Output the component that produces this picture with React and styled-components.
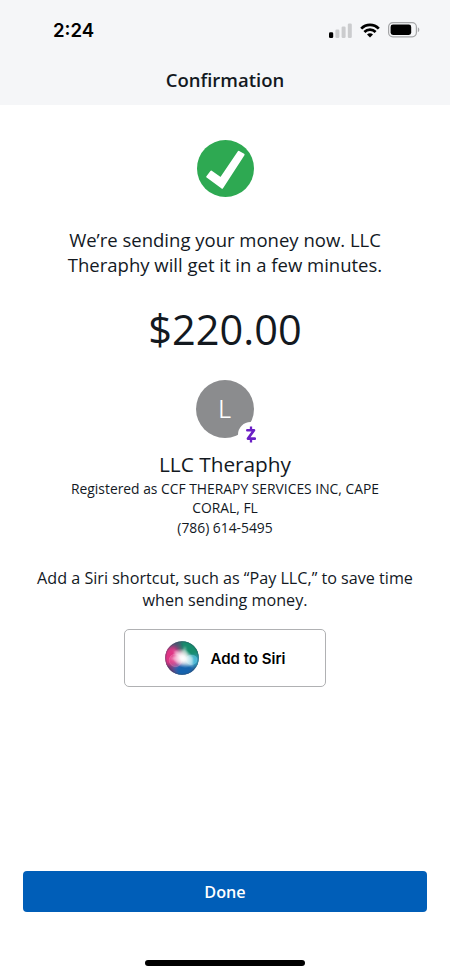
import React from 'react';
import styled, { createGlobalStyle } from 'styled-components';

const SignalIcon = () => (
  <svg width="23" height="15" viewBox="0 0 23 15">
    <rect x="0" y="9.3" width="4.2" height="5.7" rx="1.3" fill="#000" />
    <rect x="6.4" y="6.5" width="4" height="8.5" rx="1.3" fill="#cbccce" />
    <rect x="12.6" y="3.4" width="4" height="11.6" rx="1.3" fill="#cbccce" />
    <rect x="18.8" y="0.4" width="4" height="14.6" rx="1.3" fill="#cbccce" />
  </svg>
);

const WifiIcon = () => (
  <svg width="20" height="15" viewBox="0 0 20 15" fill="none" stroke="#000" strokeWidth="2.7">
    <path d="M1.2 5.6C6.1 .6 13.9 .6 18.8 5.6" />
    <path d="M4.4 9C7.5 5.8 12.5 5.8 15.6 9" />
    <path d="M10 14.4L7 11.4C8.7 9.8 11.3 9.8 13 11.4Z" fill="#000" stroke="none" />
  </svg>
);

const BatteryIcon = () => (
  <svg width="32" height="16" viewBox="0 0 32 16">
    <rect x="0.6" y="0.6" width="27.8" height="14.3" rx="4.2" fill="none" stroke="#a5a6a8" strokeWidth="1.2" />
    <rect x="2.6" y="2.5" width="20.6" height="10.5" rx="2.4" fill="#000" />
    <path d="M29.8 5.3C31.8 6 31.8 9.5 29.8 10.2Z" fill="#a5a6a8" />
  </svg>
);

const CheckIcon = () => (
  <svg width="57" height="57" viewBox="0 0 57 57">
    <circle cx="28.5" cy="28.5" r="28.5" fill="#2ea952" />
    <path
      d="M14.2 31.6L23.8 38.2L41.7 11.8L46.6 14.6L25.2 47.8L10.2 36.8Z"
      fill="#fff"
      stroke="#fff"
      strokeWidth="2"
      strokeLinejoin="round"
    />
  </svg>
);

const ZelleIcon = () => (
  <svg width="10" height="17" viewBox="0 0 10 17" fill="none" stroke="#6a1fc5" strokeWidth="2.3">
    <path d="M1.3 4.2H8L2 12.6H8.9" strokeWidth="2.6" strokeLinejoin="round" strokeLinecap="round" />
    <path d="M5 .4V4M5 12.8V16.6" />
  </svg>
);

const SiriIcon = () => (
  <svg width="34" height="34" viewBox="0 0 34 34">
    <defs>
      <clipPath id="orb">
        <circle cx="17" cy="17" r="16.8" />
      </clipPath>
      <radialGradient id="glow">
        <stop offset="0" stopColor="#fff" />
        <stop offset=".25" stopColor="#fff" stopOpacity=".9" />
        <stop offset="1" stopColor="#fff" stopOpacity="0" />
      </radialGradient>
      <filter id="soft" x="-50%" y="-50%" width="200%" height="200%">
        <feGaussianBlur stdDeviation="2.2" />
      </filter>
      <filter id="haze" x="-50%" y="-50%" width="200%" height="200%">
        <feGaussianBlur stdDeviation="1.2" />
      </filter>
    </defs>
    <g clipPath="url(#orb)">
      <rect width="34" height="34" fill="#44556f" />
      <g filter="url(#soft)">
        <path d="M15 -3H37V17L18 16Z" fill="#178c6c" />
        <path d="M-3 7L10 5L19 17L9 27L-3 24Z" fill="#df3585" />
        <path d="M18 17L37 14V27L24 25Z" fill="#2f9fbd" />
        <path d="M5 26L18 20L31 25L25 37H10Z" fill="#1764ae" />
        <path d="M-2 24L7 23L11 34L2 34Z" fill="#69366f" />
      </g>
      <circle cx="10.5" cy="19.3" r="6.3" fill="#f280b2" fillOpacity=".25" stroke="#f5a6cc" strokeOpacity=".35" strokeWidth=".8" />
      <ellipse cx="26.5" cy="18.8" rx="5.7" ry="4.8" fill="#65d1ed" fillOpacity=".5" stroke="#9ce0ed" strokeOpacity=".35" strokeWidth=".7" />
      <path
        d="M8 9L16 12L20 5L23 14L28 16L28 26L20 23L13 22L5 17L12 15Z"
        fill="#fff"
        fillOpacity=".4"
        filter="url(#haze)"
      />
      <ellipse cx="18" cy="17.2" rx="11.5" ry="9" fill="url(#glow)" transform="rotate(35 18 17.2)" />
    </g>
    <circle cx="17" cy="17" r="16.3" fill="none" stroke="#34465d" strokeOpacity=".3" />
  </svg>
);

const App = () => {
  return (
    <>
      <GlobalStyle />
      <Screen>
        <Header>
          <StatusBar>
            <Time>2:24</Time>
            <StatusIcons>
              <SignalIcon />
              <WifiIcon />
              <BatteryIcon />
            </StatusIcons>
          </StatusBar>
          <Title>Confirmation</Title>
        </Header>

        <Content>
          <CheckIcon />
          <Message>
            We’re sending your money now. LLC
            <br />
            Theraphy will get it in a few minutes.
          </Message>
          <Amount>$220.00</Amount>

          <Avatar>
            L
            <Badge>
              <ZelleIcon />
            </Badge>
          </Avatar>
          <Name>LLC Theraphy</Name>
          <Details>
            Registered as CCF THERAPY SERVICES INC, CAPE
            <br />
            CORAL, FL
            <br />
            (786) 614-5495
          </Details>

          <Hint>
            Add a Siri shortcut, such as “Pay LLC,” to save time
            <br />
            when sending money.
          </Hint>
          <SiriButton>
            <SiriIcon />
            <span>Add to Siri</span>
          </SiriButton>
        </Content>

        <Footer>
          <DoneButton>Done</DoneButton>
          <HomeIndicator />
        </Footer>
      </Screen>
    </>
  );
};

const GlobalStyle = createGlobalStyle`
  * {
    box-sizing: border-box;
  }

  body {
    margin: 0;
    background-color: #fff;
  }

  svg {
    display: block;
    flex-shrink: 0;
  }
`;

const Screen = styled.div`
  display: flex;
  flex-direction: column;
  width: 450px;
  height: 975px;
  overflow: hidden;
  background-color: #fff;
  color: #13191f;
  font-family: "Open Sans", sans-serif;
`;

const Header = styled.header`
  height: 105px;
  background-color: #f5f6f8;
`;

const StatusBar = styled.div`
  display: flex;
  justify-content: space-between;
  align-items: center;
  height: 60px;
  padding: 0 30px 0 53px;
`;

const Time = styled.span`
  font-family: Inter, sans-serif;
  font-size: 18.6px;
  font-weight: 600;
  color: #000;
`;

const StatusIcons = styled.div`
  display: flex;
  align-items: center;
  gap: 8px;
`;

const Title = styled.h1`
  margin: 6px 0 0;
  text-align: center;
  font-size: 18.5px;
  font-weight: 550;
  line-height: 28px;
`;

const Content = styled.main`
  flex: 1;
  display: flex;
  flex-direction: column;
  align-items: center;
  padding-top: 35px;
  text-align: center;
  white-space: nowrap;
`;

const Message = styled.p`
  margin: 30px 0 0;
  font-size: 18.5px;
  line-height: 25px;
`;

const Amount = styled.div`
  margin-top: 27px;
  font-size: 41.5px;
  line-height: 50px;
`;

const Avatar = styled.div`
  position: relative;
  display: flex;
  justify-content: center;
  align-items: center;
  width: 58px;
  height: 58px;
  margin-top: 26px;
  border-radius: 50%;
  background-color: #8b8c8e;
  color: #fff;
  font-family: Inter, sans-serif;
  font-size: 24px;
  font-weight: 300;
`;

const Badge = styled.span`
  position: absolute;
  right: -9px;
  bottom: -9px;
  display: flex;
  justify-content: center;
  align-items: center;
  width: 25px;
  height: 25px;
  border-radius: 50%;
  background-color: #fff;
`;

const Name = styled.h2`
  margin: 12px 0 0;
  font-size: 20.8px;
  font-weight: 400;
  line-height: 28px;
`;

const Details = styled.p`
  margin: 1px 0 0;
  font-size: 13.85px;
  line-height: 19.3px;
`;

const Hint = styled.p`
  margin: 30px 0 0;
  font-size: 16.15px;
  line-height: 22px;
`;

const SiriButton = styled.button`
  display: flex;
  justify-content: center;
  align-items: center;
  gap: 12px;
  width: 202px;
  height: 58px;
  margin-top: 18px;
  padding: 0;
  border: 1px solid #b0b1b3;
  border-radius: 5px;
  background-color: #fff;
  color: #000;
  font-family: Inter, sans-serif;
  font-size: 15px;
  font-weight: 600;

  span {
    padding-top: 1px;
  }
`;

const Footer = styled.footer`
  display: flex;
  flex-direction: column;
  align-items: center;
  height: 104px;
`;

const DoneButton = styled.button`
  width: 404px;
  height: 41px;
  padding: 0;
  border: none;
  border-radius: 4px;
  background-color: #005eb8;
  color: #fff;
  font-family: inherit;
  font-size: 16.2px;
  font-weight: 540;
`;

const HomeIndicator = styled.div`
  width: 160px;
  height: 6px;
  margin-top: 48px;
  border-radius: 3px;
  background-color: #000;
`;

export default App;
